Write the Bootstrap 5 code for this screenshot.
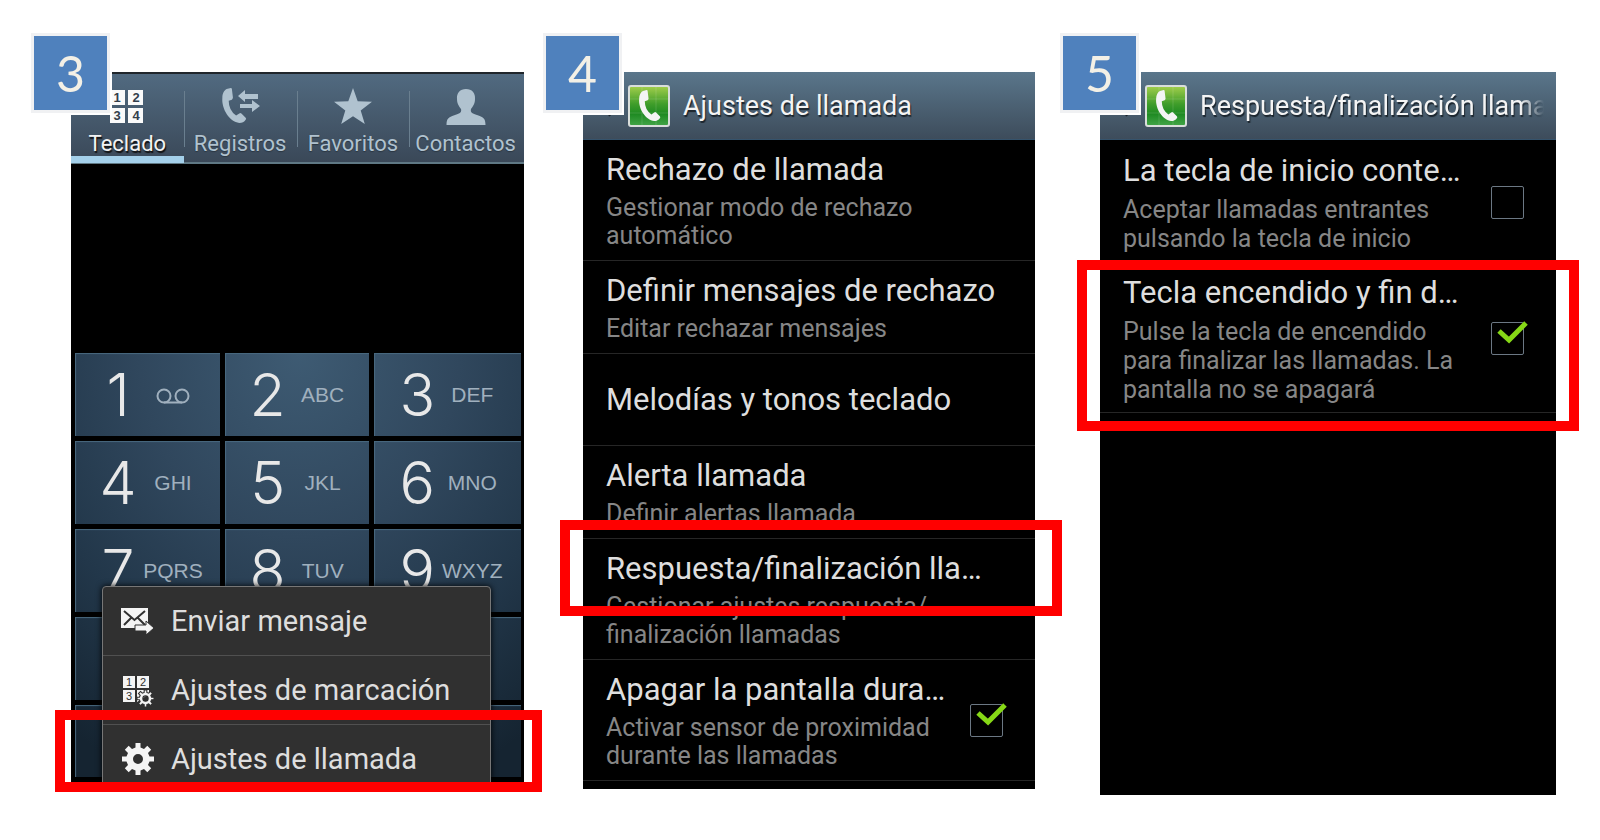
<!DOCTYPE html>
<html lang="es">
<head>
<meta charset="utf-8">
<meta name="viewport" content="width=device-width, initial-scale=1">
<title>Ajustes de llamada</title>
<link rel="stylesheet" href="https://cdn.jsdelivr.net/npm/bootstrap@5.3.0/dist/css/bootstrap.min.css">
<style>
  body { background: #fff; font-family: Roboto, "Noto Sans", sans-serif; }
  .steps { padding: 72px 44px 44px 71px; }
  .step { position: relative; flex: 453 1 0; min-width: 0; }
  .step-settings { flex-grow: 452; margin-left: 59px; }
  .step-answer { flex-grow: 456; margin-left: 65px; }
  .screen { position: relative; background: #000; overflow: hidden; }
  .screen-tall { min-height: 723px; }

  .step-number {
    position: absolute; left: -40px; top: -39px; z-index: 3;
    width: 79px; height: 80px; background: #4f81bd; color: #f3f0e6;
    border: 3px solid #f0f1f3; box-shadow: 2px 2px 0 #fff;
    font-family: Lato, sans-serif; font-size: 50px; line-height: 1;
  }
  .marker { position: absolute; z-index: 4; border: 10px solid #f00; pointer-events: none; }
  .marker-menu { left: -16px; right: -18px; bottom: -10px; height: 82px; }
  .marker-row { left: -23px; right: -27px; top: 448px; height: 96px; }
  .marker-key { left: -23px; right: -23px; top: 188px; height: 171px; }

  /* dialer tabs */
  .tabs { height: 92px; background: linear-gradient(#516a80, #3a4858); border-top: 2px solid #20262b; border-bottom: 2px solid #5f7884; padding-right: 2px; }
  .tab { position: relative; flex: 1 1 0; min-width: 0; border: 0; background: none; padding: 14px 0 0; color: #b0c2cf;
    font-size: 22px; line-height: 27px; white-space: nowrap; text-shadow: 0 1px 1px #2a3642; }
  .tab svg { width: 40px; height: 38px; margin-bottom: 4px; text-shadow: none; }
  .tab + .tab::before { content: ""; position: absolute; left: 0; top: 17px; height: 56px; width: 1px; background: #6a7f8f; }
  .tab.active { color: #f2f2f2; text-shadow: 1px 2px 1px #111; }
  .tab.active::after { content: ""; position: absolute; left: 0; right: 0; bottom: -1px; height: 7px; background: #a4d0ea; }
  .readout { height: 189px; }

  /* keypad: black key borders over one shared glow */
  .keypad { display: grid; grid-template-columns: repeat(3, 1fr); border-left: 4px solid #000;
    background: radial-gradient(ellipse 400px 460px at 50% 0, #3e5b73, #30475d 40%, #22374a 70%, #152431); }
  .key { height: 88px; border: 0 solid #000; border-width: 0 5px 5px 0; background: none; padding: 0 0 0 23px; color: #e8e8e8;
    box-shadow: inset 1px 1px 1px #4a6a80; }
  .key-last { height: 77px; }
  .key:nth-child(3n) { border-right-width: 3px; }
  .digit { width: 40px; text-align: center; font-family: Inter, sans-serif; font-weight: 300; font-size: 59px; line-height: 83px; }
  .letters { width: 70px; text-align: center; font-family: "Liberation Sans", sans-serif; font-size: 21px; color: #a0b0be; }

  /* context menu */
  .popup { position: absolute; z-index: 2; left: 31px; right: 33px; top: 514px; background: #303030; border: 1px solid #777;
    border-radius: 4px; box-shadow: 0 0 6px #000; }
  .popup-item { height: 69px; border: 0; border-bottom: 1px solid #505050; background: none; color: #dedede; padding: 0 0 0 16px; font-size: 29px; line-height: 32px; text-align: left; }
  .popup-item svg { width: 36px; height: 36px; margin-right: 16px; }

  /* settings screens */
  .titlebar { height: 68px; background: linear-gradient(#5a768b, #3d4c5b); border-bottom: 1px solid #35536c; padding: 0 12px 0 19px; }
  .titlebar svg { flex: none; }
  .title-text { color: #f4f4f4; text-shadow: 1px 2px 1px #1b242c; white-space: nowrap; overflow: hidden; font-size: 27px; font-weight: 400; line-height: 34px; margin: 0 0 0 13px; }
  .title-fade { -webkit-mask-image: linear-gradient(90deg, #000 93%, transparent); mask-image: linear-gradient(90deg, #000 93%, transparent); }
  .setting { min-height: 92px; padding: 10px 32px 10px 23px; border-bottom: 1px solid #262626; color: #dedede; text-decoration: none; white-space: nowrap; }
  .setting-name { font-size: 31px; line-height: 40px; margin-bottom: 4px; }
  .setting-only .setting-name { margin: 0; }
  .setting-note { font-size: 25px; line-height: 28px; color: #868686; }
  .step-answer .setting { padding-top: 11px; padding-bottom: 8px; }
  .step-answer .setting-note { line-height: 29px; }
  .tick { position: relative; width: 33px; height: 33px; }
  .tick input { appearance: none; display: block; margin: 0; width: 33px; height: 33px; border: 1px solid #6c7884; border-radius: 2px; background: #000; }
  .tick svg { position: absolute; left: 4px; top: -3px; width: 36px; height: 30px; pointer-events: none; display: none; }
  .tick input:checked + svg { display: block; }
  .list-end { height: 8px; }
</style>
</head>
<body>
<svg width="0" height="0" class="position-absolute" aria-hidden="true">
  <defs>
    <linearGradient id="green" x1="0" y1="0" x2="0" y2="1"><stop offset="0" stop-color="#a4cf4c"/><stop offset=".45" stop-color="#3f9d2a"/><stop offset=".7" stop-color="#1e8a22"/><stop offset="1" stop-color="#43a548"/></linearGradient>
    <symbol id="handset" viewBox="0 0 24 34"><path d="M1 9C1 5 3 2 5 1L9 0Q10 0 10 1L11 9Q11 10 10 11L7 12Q7 21 14 26L17 24Q18 23 19 24L23 28Q24 29 23 30Q21 33 17 33C8 32 0 20 1 9Z"/></symbol>
    <symbol id="call-app" viewBox="0 0 42 42">
      <rect x="1" y="1" width="40" height="40" rx="2" fill="url(#green)" stroke="#d9dedb" stroke-width="2"/>
      <path d="M14 2V40M28 2V40M2 14H40M2 28H40" stroke="#fff" stroke-opacity=".13"/>
      <use href="#handset" x="10" y="5" width="23" height="32" fill="#f4f4f4"/>
    </symbol>
    <symbol id="cog" viewBox="-16 -16 32 32">
      <path fill-rule="evenodd" d="M-2.5-16H2.5V-11.5L6-10L9.3-13.2L13.2-9.3L10-6L11.5-2.5H16V2.5H11.5L10 6L13.2 9.3L9.3 13.2L6 10L2.5 11.5V16H-2.5V11.5L-6 10L-9.3 13.2L-13.2 9.3L-10 6L-11.5 2.5H-16V-2.5H-11.5L-10-6L-13.2-9.3L-9.3-13.2L-6-10L-2.5-11.5ZM0-5A5 5 0 1 0 0 5A5 5 0 1 0 0-5Z"/>
    </symbol>
    <symbol id="check" viewBox="0 0 36 30"><path d="M4 12L14 21L31 4" fill="none" stroke="#86d816" stroke-width="5"/></symbol>
  </defs>
</svg>

<main class="steps d-flex align-items-start">

  <section class="step">
    <div class="step-number d-flex align-items-center justify-content-center">3</div>
    <div class="screen">
      <nav class="tabs d-flex">
        <button class="tab active d-flex flex-column align-items-center" type="button">
          <svg viewBox="0 0 40 38"><g fill="#fafafa"><path d="M3 2H18V17H3ZM21 2H36V17H21ZM3 20H18V35H3ZM21 20H36V35H21Z"/></g><g fill="#333f4c" font-family="Liberation Sans" font-weight="700" font-size="13" text-anchor="middle"><text x="10" y="14">1</text><text x="29" y="14">2</text><text x="10" y="32">3</text><text x="29" y="32">4</text></g></svg>
          Teclado
        </button>
        <button class="tab d-flex flex-column align-items-center" type="button">
          <svg viewBox="0 0 40 38" fill="#b0c2cf"><use href="#handset" x="1" y="0" width="26" height="36"/><path d="M18 8L25 2V6H38V11H25V14ZM20 16H32V12L40 18L32 24V20H20Z"/></svg>
          Registros
        </button>
        <button class="tab d-flex flex-column align-items-center" type="button">
          <svg viewBox="0 0 40 38" fill="#b0c2cf"><path d="M20 0L24.7 13.3L39 13.8L27.7 22.4L31.8 36L20 28.3L8.2 36L12.3 22.4L1 13.8L15.3 13.3Z"/></svg>
          Favoritos
        </button>
        <button class="tab d-flex flex-column align-items-center" type="button">
          <svg viewBox="0 0 40 38" fill="#b0c2cf"><path d="M20 1C26 1 29.500 5 29 11C29 16 27 18 25 21C24 25 27 25.500 31 27C37 29 39.500 30 39.500 37H.5C.5 30 3 29 9 27C13 25.500 16 25 15 21C13 18 11 16 11 11C10.500 5 14 1 20 1Z"/></svg>
          Contactos
        </button>
      </nav>
      <div class="readout"></div>
      <div class="keypad">
        <button class="key d-flex align-items-center" type="button"><span class="digit">1</span><span class="letters"><svg width="34" height="16" viewBox="0 0 34 16" fill="none" stroke="#a0b0be" stroke-width="2"><circle cx="8" cy="8" r="6.500"/><circle cx="26" cy="8" r="6.500"/><path d="M8 14.500H26"/></svg></span></button>
        <button class="key d-flex align-items-center" type="button"><span class="digit">2</span><span class="letters">ABC</span></button>
        <button class="key d-flex align-items-center" type="button"><span class="digit">3</span><span class="letters">DEF</span></button>
        <button class="key d-flex align-items-center" type="button"><span class="digit">4</span><span class="letters">GHI</span></button>
        <button class="key d-flex align-items-center" type="button"><span class="digit">5</span><span class="letters">JKL</span></button>
        <button class="key d-flex align-items-center" type="button"><span class="digit">6</span><span class="letters">MNO</span></button>
        <button class="key d-flex align-items-center" type="button"><span class="digit">7</span><span class="letters">PQRS</span></button>
        <button class="key d-flex align-items-center" type="button"><span class="digit">8</span><span class="letters">TUV</span></button>
        <button class="key d-flex align-items-center" type="button"><span class="digit">9</span><span class="letters">WXYZ</span></button>
        <span class="key"></span><span class="key"></span><span class="key"></span>
        <span class="key key-last"></span><span class="key key-last"></span><span class="key key-last"></span>
      </div>
      <div class="popup d-flex flex-column">
        <button class="popup-item d-flex align-items-center" type="button">
          <svg viewBox="0 0 36 36"><path d="M2 5H29V25H2Z" fill="#f4f4f4"/><path d="M5 8L15.500 17L26 8M5 22L12 15M26 22L19 15" fill="none" stroke="#303030" stroke-width="2"/><path d="M16 22H27V18L35 25L27 32V28H16Z" fill="#f4f4f4" stroke="#303030"/></svg>
          Enviar mensaje
        </button>
        <button class="popup-item d-flex align-items-center" type="button">
          <svg viewBox="0 0 36 36"><path d="M4 4H16V16H4ZM18 4H30V16H18ZM4 18H16V30H4Z" fill="#f4f4f4"/><path d="M18 18H30V22L18 30Z" fill="#f4f4f4"/><g fill="#303030" font-family="Liberation Sans" font-size="11" text-anchor="middle"><text x="10" y="14">1</text><text x="24" y="14">2</text><text x="10" y="28">3</text></g><use href="#cog" x="18" y="18" width="17" height="17" fill="#f4f4f4" stroke="#303030" stroke-width="2"/></svg>
          Ajustes de marcación
        </button>
        <button class="popup-item d-flex align-items-center" type="button">
          <svg viewBox="0 0 36 36"><use href="#cog" x="3" y="2" width="32" height="32" fill="#f4f4f4"/></svg>
          Ajustes de llamada
        </button>
      </div>
    </div>
    <div class="marker marker-menu"></div>
  </section>

  <section class="step step-settings">
    <div class="step-number d-flex align-items-center justify-content-center">4</div>
    <div class="screen">
      <header class="titlebar d-flex align-items-center">
        <svg width="10" height="24" viewBox="0 0 10 24" class="me-3"><path d="M8 2L2 12L8 22" fill="none" stroke="#18212a" stroke-width="2"/></svg>
        <svg width="42" height="42"><use href="#call-app"/></svg>
        <h1 class="title-text">Ajustes de llamada</h1>
      </header>
      <a href="#" class="setting d-block"><div class="setting-name">Rechazo de llamada</div><div class="setting-note">Gestionar modo de rechazo<br>automático</div></a>
      <a href="#" class="setting d-block"><div class="setting-name">Definir mensajes de rechazo</div><div class="setting-note">Editar rechazar mensajes</div></a>
      <a href="#" class="setting setting-only d-flex align-items-center"><div class="setting-name">Melodías y tonos teclado</div></a>
      <a href="#" class="setting d-block"><div class="setting-name">Alerta llamada</div><div class="setting-note">Definir alertas llamada</div></a>
      <a href="#" class="setting d-block"><div class="setting-name">Respuesta/finalización lla…</div><div class="setting-note">Gestionar ajustes respuesta/<br>finalización llamadas</div></a>
      <label class="setting d-flex align-items-center justify-content-between" for="proximity">
        <span><span class="setting-name d-block">Apagar la pantalla dura…</span><span class="setting-note d-block">Activar sensor de proximidad<br>durante las llamadas</span></span>
        <span class="tick"><input type="checkbox" id="proximity" checked><svg><use href="#check"/></svg></span>
      </label>
      <div class="list-end"></div>
    </div>
    <div class="marker marker-row"></div>
  </section>

  <section class="step step-answer">
    <div class="step-number d-flex align-items-center justify-content-center">5</div>
    <div class="screen screen-tall">
      <header class="titlebar d-flex align-items-center">
        <svg width="10" height="24" viewBox="0 0 10 24" class="me-3"><path d="M8 2L2 12L8 22" fill="none" stroke="#18212a" stroke-width="2"/></svg>
        <svg width="42" height="42"><use href="#call-app"/></svg>
        <h1 class="title-text title-fade">Respuesta/finalización llama</h1>
      </header>
      <label class="setting d-flex align-items-center justify-content-between" for="home-key">
        <span><span class="setting-name d-block">La tecla de inicio conte…</span><span class="setting-note d-block">Aceptar llamadas entrantes<br>pulsando la tecla de inicio</span></span>
        <span class="tick"><input type="checkbox" id="home-key"><svg><use href="#check"/></svg></span>
      </label>
      <label class="setting d-flex align-items-center justify-content-between" for="power-key">
        <span><span class="setting-name d-block">Tecla encendido y fin d…</span><span class="setting-note d-block">Pulse la tecla de encendido<br>para finalizar las llamadas. La<br>pantalla no se apagará</span></span>
        <span class="tick"><input type="checkbox" id="power-key" checked><svg><use href="#check"/></svg></span>
      </label>
    </div>
    <div class="marker marker-key"></div>
  </section>

</main>
<script src="https://cdn.jsdelivr.net/npm/bootstrap@5.3.0/dist/js/bootstrap.bundle.min.js"></script>
</body>
</html>
